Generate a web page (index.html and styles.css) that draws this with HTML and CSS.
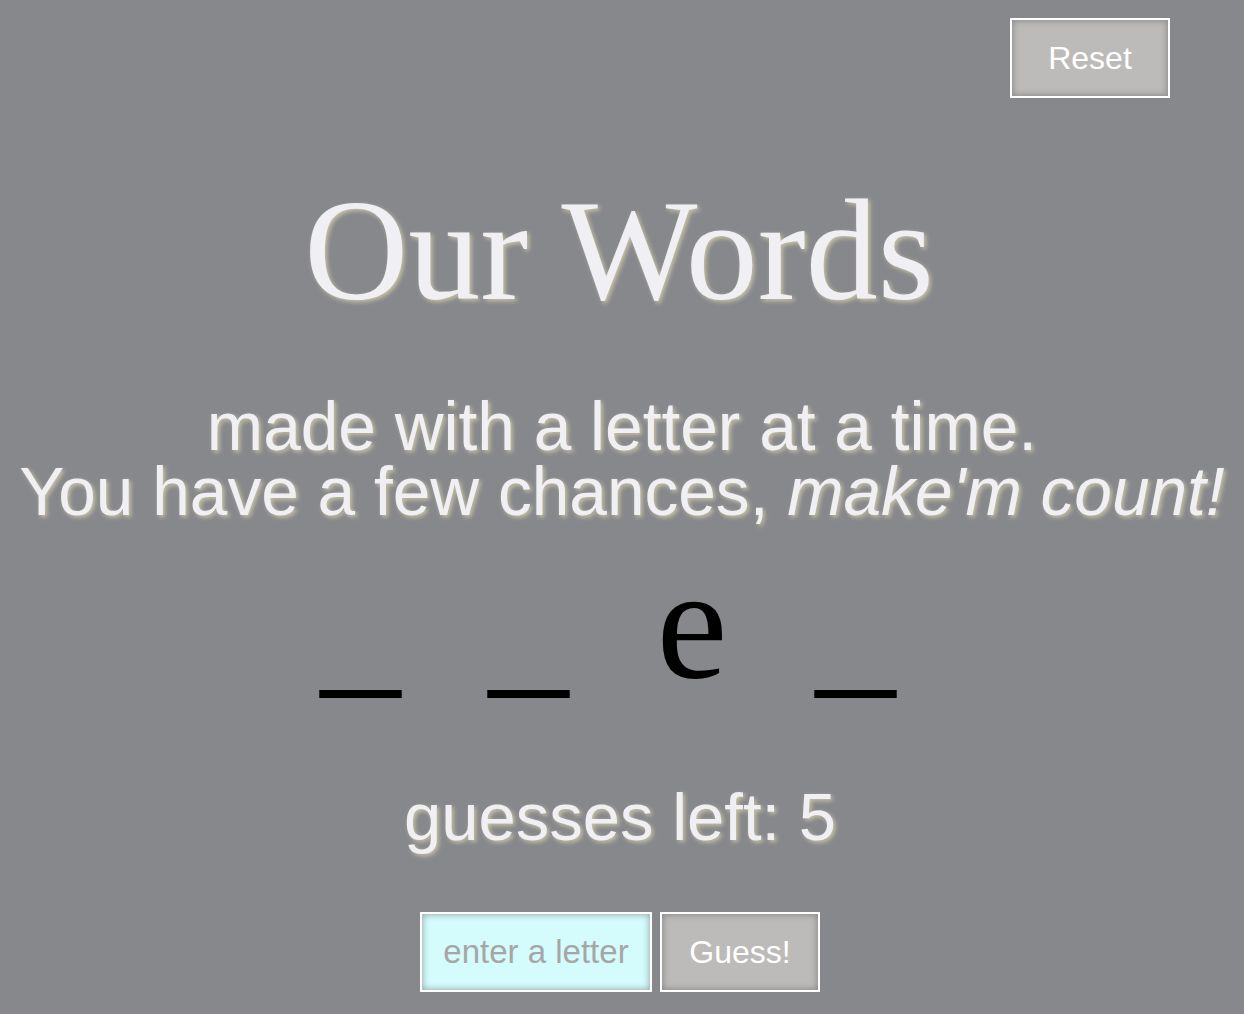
FILE: index.html
```html
<!DOCTYPE html>
<html lang="en">
<head>
<meta charset="utf-8">
<title>Our Words</title>
<link rel="stylesheet" href="styles.css">
</head>
<body>
  <div class="top">
    <button class="btn reset" type="button">Reset</button>
  </div>
  <h1 class="title">Our Words</h1>
  <p class="subtitle">made with a letter at a time.<br>You have a few chances, <em>make'm count!</em></p>
  <div class="word">_ _ e _</div>
  <p class="guesses">guesses left: 5</p>
  <form class="guess-row">
    <input class="letter-input" type="text" placeholder="enter a letter">
    <button class="btn guess" type="button">Guess!</button>
  </form>
</body>
</html>
```

FILE: styles.css
```css
html, body {
  margin: 0;
  padding: 0;
}

body {
  background: #87888c;
  text-align: center;
  font-family: "Liberation Sans", Arial, sans-serif;
  color: #f0eff4;
  height: 1014px;
  overflow: hidden;
}

.top {
  display: flex;
  justify-content: flex-end;
  padding: 18px 74px 0 0;
}

.btn {
  box-sizing: border-box;
  width: 160px;
  height: 80px;
  border: 2px solid #ffffff;
  background: #bdbbb9;
  box-shadow: inset 0 0 6px 1px rgba(80, 80, 80, 0.45);
  color: #ffffff;
  font-family: "Liberation Sans", Arial, sans-serif;
  font-size: 32px;
  padding: 0;
  margin: 0;
  cursor: pointer;
}

.title {
  margin: 81px 0 0;
  font-family: "Liberation Serif", "Times New Roman", serif;
  font-weight: normal;
  font-size: 144px;
  line-height: 144px;
  text-shadow: 2px 2px 4px #c9c3a6;
  padding-right: 6px;
}

.subtitle {
  margin: 71px 0 0;
  font-size: 67.6px;
  line-height: 65px;
  text-shadow: 2px 2px 4px #c9c3a6;
}

.subtitle em {
  font-style: italic;
}

.word {
  margin: 19px 0 0;
  font-family: "Liberation Serif", "Times New Roman", serif;
  font-size: 160px;
  line-height: 160px;
  letter-spacing: 24px;
  color: #000000;
  white-space: pre;
  padding-right: 4px;
}

.guesses {
  margin: 80px 0 0;
  font-size: 67px;
  line-height: 67px;
  text-shadow: 2px 2px 4px #c9c3a6;
  padding-right: 4px;
}

.guess-row {
  margin: 62px 0 0;
  display: flex;
  justify-content: center;
  gap: 8px;
  padding-right: 4px;
}

.letter-input {
  box-sizing: border-box;
  width: 232px;
  height: 80px;
  border: 2px solid #ffffff;
  background: #d4fcfd;
  box-shadow: inset 0 0 6px 1px rgba(80, 80, 80, 0.45);
  font-family: "Liberation Sans", Arial, sans-serif;
  font-size: 33px;
  color: #555555;
  text-align: center;
  padding: 0;
  margin: 0;
  outline: none;
}

.letter-input::placeholder {
  color: #a6a6a6;
  opacity: 1;
}
```
